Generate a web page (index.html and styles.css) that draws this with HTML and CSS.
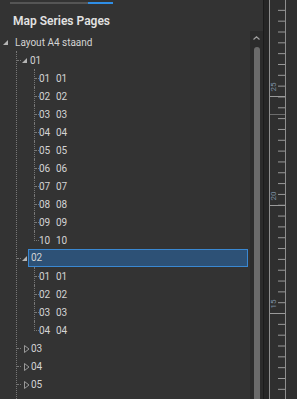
FILE: index.html
```html
<!DOCTYPE html>
<html>
<head>
    <meta charset="UTF-8" />
    <title>Map Series Pages</title>
    <link rel="stylesheet" href="styles.css">
</head>
<body>
    <div class="app">
        <div class="panel">
            <div class="tabs"><span class="tab-line"></span><span class="tab-active"></span></div>
            <h2 class="title">Map Series Pages</h2>
            <div class="tree">
                <div class="row root"><span class="exp"></span><span class="label">Layout A4 staand</span></div>
                <ul class="level1">
                    <li>
                        <div class="row"><span class="conn"></span><span class="exp"></span><span class="label">01</span></div>
                        <ul class="level2">
                            <li><div class="row"><span class="conn"></span><span class="num">01</span><span class="label">01</span></div></li>
                            <li><div class="row"><span class="conn"></span><span class="num">02</span><span class="label">02</span></div></li>
                            <li><div class="row"><span class="conn"></span><span class="num">03</span><span class="label">03</span></div></li>
                            <li><div class="row"><span class="conn"></span><span class="num">04</span><span class="label">04</span></div></li>
                            <li><div class="row"><span class="conn"></span><span class="num">05</span><span class="label">05</span></div></li>
                            <li><div class="row"><span class="conn"></span><span class="num">06</span><span class="label">06</span></div></li>
                            <li><div class="row"><span class="conn"></span><span class="num">07</span><span class="label">07</span></div></li>
                            <li><div class="row"><span class="conn"></span><span class="num">08</span><span class="label">08</span></div></li>
                            <li><div class="row"><span class="conn"></span><span class="num">09</span><span class="label">09</span></div></li>
                            <li><div class="row"><span class="conn"></span><span class="num">10</span><span class="label">10</span></div></li>
                        </ul>
                    </li>
                    <li>
                        <div class="row"><span class="conn"></span><span class="exp"></span><span class="label selected">02</span></div>
                        <ul class="level2">
                            <li><div class="row"><span class="conn"></span><span class="num">01</span><span class="label">01</span></div></li>
                            <li><div class="row"><span class="conn"></span><span class="num">02</span><span class="label">02</span></div></li>
                            <li><div class="row"><span class="conn"></span><span class="num">03</span><span class="label">03</span></div></li>
                            <li><div class="row"><span class="conn"></span><span class="num">04</span><span class="label">04</span></div></li>
                        </ul>
                    </li>
                    <li><div class="row"><span class="conn"></span><svg class="col" width="6" height="8" viewBox="0 0 6 8"><path d="M0.5 0.5 L5 4 L0.5 7.5 Z" fill="none" stroke="#9a9a9a" stroke-width="1"/></svg><span class="label">03</span></div></li>
                    <li><div class="row"><span class="conn"></span><svg class="col" width="6" height="8" viewBox="0 0 6 8"><path d="M0.5 0.5 L5 4 L0.5 7.5 Z" fill="none" stroke="#9a9a9a" stroke-width="1"/></svg><span class="label">04</span></div></li>
                    <li><div class="row"><span class="conn"></span><svg class="col" width="6" height="8" viewBox="0 0 6 8"><path d="M0.5 0.5 L5 4 L0.5 7.5 Z" fill="none" stroke="#9a9a9a" stroke-width="1"/></svg><span class="label">05</span></div></li>
                </ul>
            </div>
        </div>
        <div class="scrollbar">
            <svg class="up" width="7" height="4" viewBox="0 0 7 4"><path d="M0.5 3.5 L3.5 0.8 L6.5 3.5" fill="none" stroke="#a0a0a0" stroke-width="1.2"/></svg>
            <div class="thumb"></div>
        </div>
        <div class="ruler">
            <div class="gutter"></div>
            <div class="scale">
                <div class="mark" style="top:96px"><span>25</span></div>
                <div class="mark faint" style="top:114px"></div>
                <div class="mark" style="top:205px"><span>20</span></div>
                <div class="mark" style="top:313px"><span>15</span></div>
            </div>
        </div>
    </div>
</body>
</html>
```

FILE: styles.css
```css
body {
    margin: 0;
    background: #333333;
    font-family: Roboto, "Noto Sans", sans-serif;
    color: #d4d4d4;
}
.app {
    display: flex;
    height: 399px;
    overflow: hidden;
}
.panel {
    width: 250px;
    flex-shrink: 0;
    overflow: hidden;
}
.tabs {
    display: flex;
    margin: 2px 0 0 10px;
    height: 2px;
}
.tab-line {
    width: 78px;
    background: #555555;
}
.tab-active {
    width: 25px;
    background: #2f8ee6;
}
.title {
    margin: 6px 0 0 13px;
    height: 23px;
    line-height: 23px;
    font-size: 12px;
    font-weight: 600;
    color: #e2e2e2;
}
.tree {
    font-size: 10px;
}
.tree ul {
    list-style: none;
    margin: 0;
    padding: 0;
}
.row {
    display: flex;
    align-items: center;
    height: 18px;
    white-space: nowrap;
}
.root {
    padding-left: 3px;
}
.exp {
    width: 0;
    height: 0;
    border-right: 5px solid #b4b4b4;
    border-top: 5px solid transparent;
    margin-right: 7px;
    margin-top: 1px;
}
.level1 {
    margin-left: 16px !important;
    padding-bottom: 20px !important;
    border-left: 1px dotted #777777;
}
.level1 > li > .row .exp {
    margin-left: 1px;
    margin-right: 3px;
}
.conn {
    align-self: flex-start;
    width: 4px;
    height: 9px;
    border-bottom: 1px dotted #777777;
}
.col {
    margin: 1px 1px 0 3px;
}
.level2 {
    margin-left: 17px !important;
}
.level2 > li {
    border-left: 1px dotted #777777;
}
.level2 > li:last-child {
    border-left-color: transparent;
}
.level2 > li:last-child .conn {
    margin-left: -1px;
    border-left: 1px dotted #777777;
}
.num {
    width: 17px;
}
.selected {
    flex: 1;
    height: 16px;
    line-height: 16px;
    margin-left: -2px;
    margin-right: 2px;
    padding-left: 2px;
    background: #2d5176;
    border: 1px solid #3a88d2;
}
.scrollbar {
    width: 13px;
    flex-shrink: 0;
    margin-top: 31px;
    background: #2b2b2b;
    display: flex;
    flex-direction: column;
    align-items: center;
}
.up {
    margin-top: 5px;
}
.thumb {
    margin-top: 7px;
    width: 6px;
    flex: 1;
    background: #6a6a6a;
    border-radius: 3px 3px 0 0;
}
.ruler {
    flex: 1;
    display: flex;
    background: #2f2f2f;
}
.gutter {
    width: 5px;
    background: #262626;
    border-left: 1px solid #1c1c1c;
}
.scale {
    position: relative;
    width: 15px;
    border-left: 1px solid #8e8e8e;
    border-right: 1px solid #8e8e8e;
    background: linear-gradient(to bottom, transparent 9.83px, #9a9a9a 9.83px, #9a9a9a 10.83px) right top / 7px 10.833px repeat-y;
}
.mark {
    position: absolute;
    left: 0;
    right: 0;
    height: 1px;
    background: #9a9a9a;
}
.mark.faint {
    background: #6c6c6c;
}
.mark span {
    position: absolute;
    left: -1px;
    bottom: 6px;
    font-size: 8px;
    line-height: 8px;
    color: #7d90a4;
    transform: rotate(-90deg);
}
```
